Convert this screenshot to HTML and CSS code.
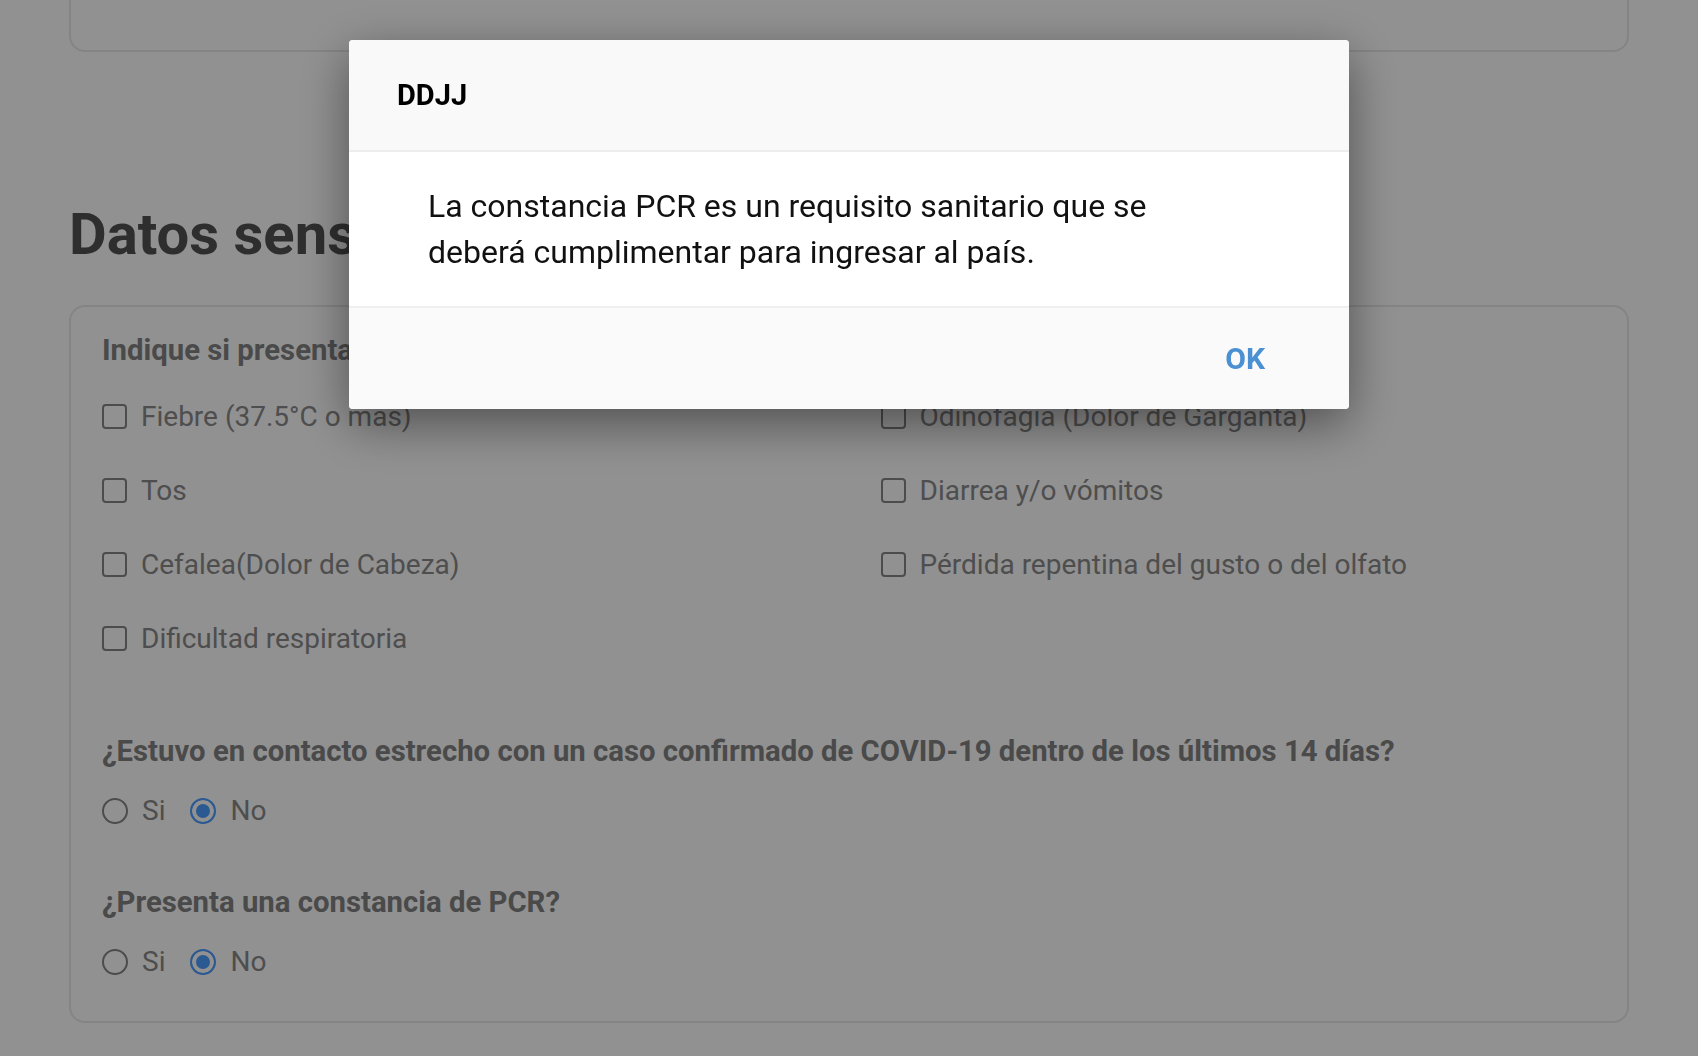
FILE: index.html
```html
<!DOCTYPE html>
<html lang="es">
<head>
    <meta charset="UTF-8">
    <meta name="viewport" content="width=device-width, initial-scale=1.0">
    <title>DDJJ - Datos sensibles</title>
    <link rel="stylesheet" href="styles.css">
</head>
<body>
    <div class="page">
        <div class="card card-prev"></div>

        <h2 class="section-title">Datos sensibles</h2>

        <div class="card card-health">
            <div class="symptoms">
                <p class="question">Indique si presenta alguno de los siguientes síntomas</p>
                <div class="symptom-grid">
                    <label class="option"><input type="checkbox" class="check"> Fiebre (37.5°C o mas)</label>
                    <label class="option"><input type="checkbox" class="check"> Odinofagia (Dolor de Garganta)</label>
                    <label class="option"><input type="checkbox" class="check"> Tos</label>
                    <label class="option"><input type="checkbox" class="check"> Diarrea y/o vómitos</label>
                    <label class="option"><input type="checkbox" class="check"> Cefalea(Dolor de Cabeza)</label>
                    <label class="option"><input type="checkbox" class="check"> Pérdida repentina del gusto o del olfato</label>
                    <label class="option"><input type="checkbox" class="check"> Dificultad respiratoria</label>
                </div>
            </div>

            <div class="question-block">
                <p class="question">¿Estuvo en contacto estrecho con un caso confirmado de COVID-19 dentro de los últimos 14 días?</p>
                <div class="radio-group">
                    <label class="option"><input type="radio" name="contacto" class="radio"> Si</label>
                    <label class="option"><input type="radio" name="contacto" class="radio" checked> No</label>
                </div>
            </div>

            <div class="question-block">
                <p class="question">¿Presenta una constancia de PCR?</p>
                <div class="radio-group">
                    <label class="option"><input type="radio" name="pcr" class="radio"> Si</label>
                    <label class="option"><input type="radio" name="pcr" class="radio" checked> No</label>
                </div>
            </div>
        </div>
    </div>

    <!-- modal de aviso -->
    <div class="overlay">
        <div class="modal">
            <div class="modal-header">
                <h3 class="modal-title">DDJJ</h3>
            </div>
            <div class="modal-body">
                <p>La constancia PCR es un requisito sanitario que se<br>deberá cumplimentar para ingresar al país.</p>
            </div>
            <div class="modal-footer">
                <button class="modal-btn">OK</button>
            </div>
        </div>
    </div>
</body>
</html>
```

FILE: styles.css
```css
* {
    box-sizing: border-box;
}

body {
    margin: 0;
    background: #fff;
    font-family: Roboto, "Liberation Sans", sans-serif;
    overflow: hidden;
}

.page {
    max-width: 1560px;
    margin: 0 auto;
}

.card {
    border: 2px solid #e8e8e8;
    border-radius: 16px;
}

.card-prev {
    height: 202px;
    margin-top: -150px;
}

.section-title {
    margin: 148px 0 35px;
    font-size: 58px;
    line-height: 1.2;
    font-weight: 700;
    color: #525252;
}

.card-health {
    padding: 26px 30px 42px 31px;
}

.question {
    margin: 0;
    font-size: 29.3px;
    line-height: 34px;
    font-weight: 700;
    color: #838383;
}

.symptoms {
    margin-bottom: 78px;
}

.symptom-grid {
    display: grid;
    grid-template-columns: 1fr 1fr;
    column-gap: 62px;
    row-gap: 40px;
    margin-top: 33px;
}

.option {
    display: flex;
    align-items: center;
    gap: 14px;
    height: 34px;
    font-size: 28px;
    color: #8a8a8a;
}

.check,
.radio {
    appearance: none;
    -webkit-appearance: none;
    margin: 0;
    flex-shrink: 0;
    border: 2px solid #878787;
    background: #fff;
}

.check {
    width: 25px;
    height: 25px;
    border-radius: 4px;
}

.radio {
    width: 26px;
    height: 26px;
    border-radius: 50%;
}

.radio:checked {
    border-color: #4c9dff;
    background: #4c9dff;
    box-shadow: inset 0 0 0 4px #fff;
}

.question-block {
    margin-top: 57px;
}

.radio-group {
    display: flex;
    gap: 25px;
    margin-top: 26px;
}

/* modal */
.overlay {
    position: fixed;
    inset: 0;
    background: rgba(0, 0, 0, 0.43);
    display: flex;
    justify-content: center;
    align-items: flex-start;
    padding-top: 40px;
}

.modal {
    width: 1000px;
    background: #fff;
    border-radius: 4px;
    overflow: hidden;
    box-shadow: 0 15px 50px rgba(0, 0, 0, 0.45);
}

.modal-header {
    background: #f9f9f9;
    border-bottom: 2px solid #ededed;
    padding: 38px 48px 37px;
}

.modal-title {
    margin: 0;
    font-size: 29px;
    line-height: 35px;
    font-weight: 700;
    color: #000;
}

.modal-body {
    padding: 31px 79px 31px;
    border-bottom: 2px solid #efefef;
}

.modal-body p {
    margin: 0;
    font-size: 32px;
    line-height: 46px;
    color: #111;
}

.modal-footer {
    background: #fafafa;
    display: flex;
    justify-content: flex-end;
    align-items: center;
    height: 101px;
    padding-right: 84px;
}

.modal-btn {
    border: none;
    background: none;
    padding: 0;
    font-family: inherit;
    font-size: 30px;
    font-weight: 700;
    color: #4a90d2;
    cursor: pointer;
}
```
